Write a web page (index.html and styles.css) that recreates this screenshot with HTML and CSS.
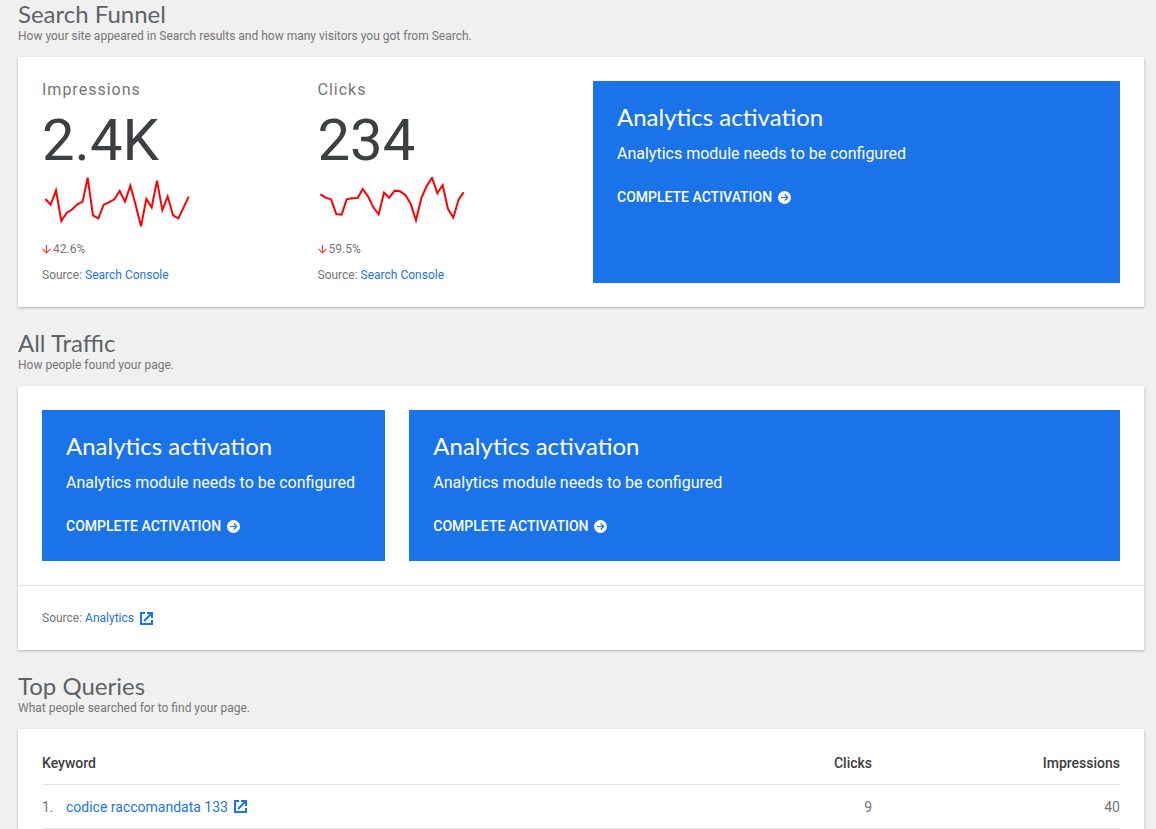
FILE: index.html
```html
<!DOCTYPE html>
<html lang="en">
<head>
<meta charset="utf-8">
<title>Site Kit Dashboard</title>
<link rel="stylesheet" href="styles.css">
</head>
<body>
<svg class="sprite" aria-hidden="true">
  <symbol id="external" viewBox="0 0 13 13">
    <path fill="none" stroke="currentColor" stroke-width="2" d="M5 1H1V12H12V8M4 9L11 2"/>
    <path fill="currentColor" d="M7 0H13V6H11V3.500L9.500 2H7Z"/>
  </symbol>
  <symbol id="go" viewBox="0 0 13 13">
    <circle cx="6.500" cy="6.500" r="6.500" fill="#fff"/>
    <path fill="none" stroke="#1a73e8" stroke-width="1.200" d="M3 6.500H9.500M6.700 3.500L9.700 6.500L6.700 9.500"/>
  </symbol>
  <symbol id="down" viewBox="0 0 9 9">
    <path fill="none" stroke="currentColor" stroke-width="1.200" d="M4.500 0V8M.5 3.800L4.500 7.800L8.500 3.800"/>
  </symbol>
</svg>
<main class="page">
  <section class="section">
    <header class="section-header">
      <h2 class="section-title">Search Funnel</h2>
      <p class="section-text">How your site appeared in Search results and how many visitors you got from Search.</p>
    </header>
    <div class="card">
      <div class="grid">
        <article class="metric span-3">
          <h3 class="metric-label">Impressions</h3>
          <div class="metric-value">2.4K</div>
          <svg class="sparkline" viewBox="36 36 456 156" aria-hidden="true"><polyline points="46,102 62,119 78,76 94,168 110,143 125,135 141,119 158,110 173,38 189,151 205,160 221,119 237,112 253,103 269,78 285,110 301,62 317,120 333,184 349,102 365,127 381,47 397,135 413,94 429,151 445,160 461,127 476,95"/></svg>
          <div class="metric-change"><svg class="arrow"><use href="#down"/></svg>42.6%</div>
          <div class="source">Source: <a href="#">Search Console</a></div>
        </article>
        <article class="metric span-3">
          <h3 class="metric-label">Clicks</h3>
          <div class="metric-value">234</div>
          <svg class="sparkline" viewBox="39 36 456 156" aria-hidden="true"><polyline points="46,88 62,98 78,103 94,147 110,149 125,103 141,100 158,99 173,72 189,94 205,127 221,148 237,83 253,98 269,77 285,79 301,90 317,116 333,166 349,99 365,63 381,38 397,85 413,60 429,132 445,158 461,103 476,82"/></svg>
          <div class="metric-change"><svg class="arrow"><use href="#down"/></svg>59.5%</div>
          <div class="source">Source: <a href="#">Search Console</a></div>
        </article>
        <article class="cta span-6">
          <h3 class="cta-title">Analytics activation</h3>
          <p class="cta-text">Analytics module needs to be configured</p>
          <a class="cta-link" href="#">COMPLETE ACTIVATION<svg class="icon"><use href="#go"/></svg></a>
        </article>
      </div>
    </div>
  </section>

  <section class="section">
    <header class="section-header">
      <h2 class="section-title">All Traffic</h2>
      <p class="section-text">How people found your page.</p>
    </header>
    <div class="card">
      <div class="grid">
        <article class="cta span-4">
          <h3 class="cta-title">Analytics activation</h3>
          <p class="cta-text">Analytics module needs to be configured</p>
          <a class="cta-link" href="#">COMPLETE ACTIVATION<svg class="icon"><use href="#go"/></svg></a>
        </article>
        <article class="cta span-8">
          <h3 class="cta-title">Analytics activation</h3>
          <p class="cta-text">Analytics module needs to be configured</p>
          <a class="cta-link" href="#">COMPLETE ACTIVATION<svg class="icon"><use href="#go"/></svg></a>
        </article>
      </div>
      <footer class="card-footer source">Source: <a class="external" href="#">Analytics<svg class="icon"><use href="#external"/></svg></a></footer>
    </div>
  </section>

  <section class="section">
    <header class="section-header">
      <h2 class="section-title">Top Queries</h2>
      <p class="section-text">What people searched for to find your page.</p>
    </header>
    <div class="card table-card">
      <table class="queries">
        <thead>
          <tr><th class="keyword" scope="col">Keyword</th><th class="number" scope="col">Clicks</th><th class="number" scope="col">Impressions</th></tr>
        </thead>
        <tbody>
          <tr><td class="keyword"><div class="query"><span class="rank">1.</span><a class="external" href="#">codice raccomandata 133<svg class="icon"><use href="#external"/></svg></a></div></td><td class="number">9</td><td class="number">40</td></tr>
        </tbody>
      </table>
    </div>
  </section>
</main>
</body>
</html>
```

FILE: styles.css
```css
* { box-sizing: border-box; }
body {
  margin: 0;
  background: #f0f0f0;
  color: #757575;
  font-family: Roboto, "Liberation Sans", sans-serif;
  font-size: 14px;
}
h2, h3, p { margin: 0; font-weight: 400; }
a { color: #1a73e8; text-decoration: none; }
.sprite { display: none; }
.page {
  display: flex;
  flex-direction: column;
  gap: 24px;
  padding: 2px 12px 0 18px;
}
.section-header { margin-bottom: 12px; }
.section-title, .cta-title {
  font-family: Lato, "Open Sans", sans-serif;
  font-size: 24px;
}
.section-title { margin-bottom: 2px; color: #5f6368; line-height: 23px; }
.section-text { font-size: 12px; line-height: 18px; }
.card {
  background: #fff;
  box-shadow: 0 1px 3px rgba(0, 0, 0, .2), 0 1px 1px rgba(0, 0, 0, .05);
}
.grid {
  display: grid;
  grid-template-columns: repeat(12, minmax(0, 1fr));
  gap: 24px;
  padding: 24px;
}
.span-3 { grid-column: span 3; }
.span-4 { grid-column: span 4; }
.span-6 { grid-column: span 6; }
.span-8 { grid-column: span 8; }

.metric { display: flex; flex-direction: column; }
.metric-label { font-size: 16px; line-height: 18px; letter-spacing: 1px; }
.metric-value {
  margin: 9px 0 5px;
  color: #3c4043;
  font-size: 58px;
  line-height: 64px;
}
.sparkline { width: 152px; height: 52px; }
.sparkline polyline { fill: none; stroke: #f00; stroke-width: 6; }
.metric-change {
  display: flex;
  align-items: center;
  gap: 2px;
  margin: 11px 0 9px;
  font-size: 12px;
  line-height: 18px;
}
.arrow { width: 9px; height: 9px; color: #ea4335; }
.source { font-size: 12px; line-height: 16px; }

.cta { padding: 24px; background: #1a73e8; color: #fff; }
.cta-title { line-height: 24px; }
.cta-text { margin: 13px 0 20px; font-size: 16px; line-height: 24px; }
.cta-link {
  display: flex;
  align-items: center;
  gap: 6px;
  color: #fff;
  font-weight: 500;
  line-height: 22px;
}
.icon { flex: none; width: 13px; height: 13px; }
.external { display: inline-flex; align-items: center; gap: 6px; }
.card-footer { padding: 24px; border-top: 1px solid #e4e4e4; }

.table-card { padding: 12px 24px; }
.queries { width: 100%; border-collapse: separate; border-spacing: 0; table-layout: fixed; }
.queries th, .queries td {
  height: 44px;
  padding: 0;
  border-bottom: 1px solid #e4e4e4;
  text-align: right;
}
.queries th { color: #3c4043; font-weight: 500; }
.queries .keyword { width: 54%; text-align: left; }
.query { display: flex; align-items: center; }
.rank { width: 24px; }
```
